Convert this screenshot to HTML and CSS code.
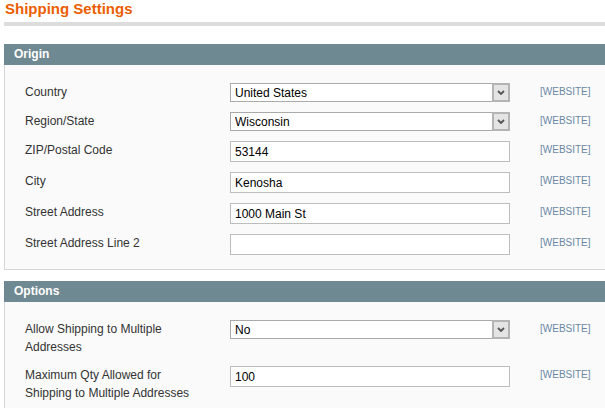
FILE: index.html
```html
<!DOCTYPE html>
<html lang="en">
    <head>
        <meta charset="UTF-8" />
        <meta name="viewport" content="width=device-width, initial-scale=1.0" />
        <title>Shipping Settings</title>

        <link rel="stylesheet" href="styles.css">
    </head>

    <body>
        <div class="page">
            <h3 class="page-title">Shipping Settings</h3>
            <div class="title-rule"></div>

            <div class="section">
                <div class="section-head">Origin</div>
                <div class="section-body">
                    <table class="form-list">
                        <tr>
                            <td class="label">Country</td>
                            <td class="value">
                                <div class="select-wrap">
                                    <select>
                                        <option>United States</option>
                                    </select>
                                    <span class="select-arrow">
                                        <svg viewBox="0 0 8 5" width="8" height="5">
                                            <path d="M1 1l3 3 3-3" fill="none" stroke="#555" stroke-width="1.8" />
                                        </svg>
                                    </span>
                                </div>
                            </td>
                            <td class="scope">[WEBSITE]</td>
                        </tr>
                        <tr>
                            <td class="label">Region/State</td>
                            <td class="value">
                                <div class="select-wrap">
                                    <select>
                                        <option>Wisconsin</option>
                                    </select>
                                    <span class="select-arrow">
                                        <svg viewBox="0 0 8 5" width="8" height="5">
                                            <path d="M1 1l3 3 3-3" fill="none" stroke="#555" stroke-width="1.8" />
                                        </svg>
                                    </span>
                                </div>
                            </td>
                            <td class="scope">[WEBSITE]</td>
                        </tr>
                        <tr>
                            <td class="label">ZIP/Postal Code</td>
                            <td class="value"><input type="text" value="53144" /></td>
                            <td class="scope">[WEBSITE]</td>
                        </tr>
                        <tr>
                            <td class="label">City</td>
                            <td class="value"><input type="text" value="Kenosha" /></td>
                            <td class="scope">[WEBSITE]</td>
                        </tr>
                        <tr>
                            <td class="label">Street Address</td>
                            <td class="value"><input type="text" value="1000 Main St" /></td>
                            <td class="scope">[WEBSITE]</td>
                        </tr>
                        <tr>
                            <td class="label">Street Address Line 2</td>
                            <td class="value"><input type="text" value="" /></td>
                            <td class="scope">[WEBSITE]</td>
                        </tr>
                    </table>
                </div>
            </div>

            <div class="section">
                <div class="section-head">Options</div>
                <div class="section-body">
                    <table class="form-list">
                        <tr>
                            <td class="label">Allow Shipping to Multiple Addresses</td>
                            <td class="value">
                                <div class="select-wrap">
                                    <select>
                                        <option>No</option>
                                    </select>
                                    <span class="select-arrow">
                                        <svg viewBox="0 0 8 5" width="8" height="5">
                                            <path d="M1 1l3 3 3-3" fill="none" stroke="#555" stroke-width="1.8" />
                                        </svg>
                                    </span>
                                </div>
                            </td>
                            <td class="scope">[WEBSITE]</td>
                        </tr>
                        <tr>
                            <td class="label">Maximum Qty Allowed for Shipping to Multiple Addresses</td>
                            <td class="value"><input type="text" value="100" /></td>
                            <td class="scope">[WEBSITE]</td>
                        </tr>
                    </table>
                </div>
            </div>
        </div>
    </body>
</html>
```

FILE: styles.css
```css
* {
    margin: 0;
    padding: 0;
    box-sizing: border-box;
}

html,
body {
    overflow: hidden;
}

body {
    background-color: #fff;
    color: #2f2f2f;
    font-family: "Liberation Sans", Arial, sans-serif;
    font-size: 12px;
}

.page {
    margin-right: -20px;
}

.page-title {
    padding-left: 5px;
    font-size: 15px;
    line-height: 18px;
    font-weight: bold;
    color: #eb5e00;
}

.title-rule {
    height: 4px;
    margin: 4px 0 0 4px;
    background-color: #dddddd;
}

.section {
    margin-left: 4px;
    margin-top: 11px;
}

.title-rule + .section {
    margin-top: 18px;
}

.section-head {
    height: 21px;
    padding-left: 10px;
    background-color: #6f8992;
    color: #fff;
    font-weight: bold;
    line-height: 21px;
}

.section-body {
    padding: 13px 0 9px 20px;
    border: 1px solid #d6d6d6;
    border-top: none;
    background-color: #fafafa;
}

.form-list {
    border-collapse: collapse;
}

.form-list td {
    vertical-align: top;
    padding: 5px 0;
}

.form-list .label {
    width: 205px;
    padding-right: 35px;
    line-height: 18px;
    color: #333;
}

.form-list .value {
    width: 280px;
}

.form-list .scope {
    padding-left: 30px;
    font-size: 10px;
    line-height: 18px;
    color: #6a88a4;
}

input {
    display: block;
    width: 280px;
    height: 21px;
    padding: 0 4px;
    border: 1px solid #bdbdbd;
    background-color: #fff;
    font-family: "Liberation Sans", Arial, sans-serif;
    font-size: 12px;
    color: #000;
}

.select-wrap {
    position: relative;
    width: 280px;
    height: 19px;
}

select {
    display: block;
    width: 100%;
    height: 19px;
    padding: 0 4px;
    border: 1px solid #aaaaaa;
    background-color: #fff;
    font-family: "Liberation Sans", Arial, sans-serif;
    font-size: 12px;
    color: #000;
    appearance: none;
    -webkit-appearance: none;
}

.select-arrow {
    position: absolute;
    top: 0;
    right: 0;
    width: 18px;
    height: 19px;
    display: flex;
    align-items: center;
    justify-content: center;
    border: 2px solid #b4b4b4;
    background-color: #e4e4e4;
}
```
